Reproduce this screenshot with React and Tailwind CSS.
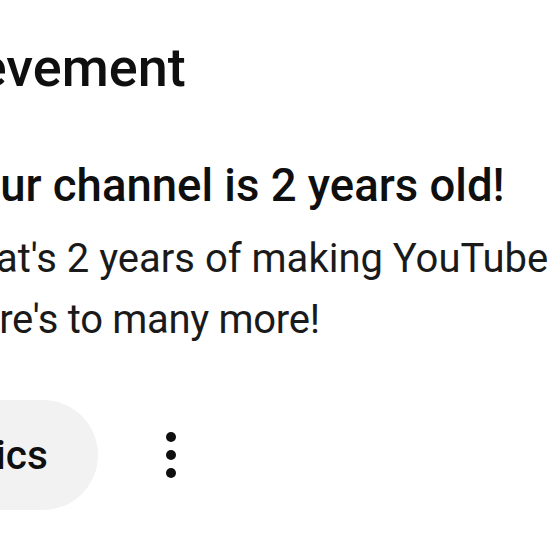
import React from 'react';

const App = () => {
    return (
        <div className="w-[560px] h-[560px] overflow-hidden bg-white font-['Roboto',sans-serif] text-[#0f0f0f] whitespace-nowrap">
            <div className="pt-[38px]">
                <h1 className="-ml-[130px] text-[54px] font-medium leading-[60px]">Achievement</h1>
                <h2 className="-ml-[52px] mt-[61px] text-[45.5px] font-medium leading-[54px]">Your channel is 2 years old!</h2>
                <p className="-ml-[50px] mt-[15px] text-[40px] leading-[61px] text-[#1a1a1a]">
                    <span className="block">That's 2 years of making YouTube awesome.</span>
                    <span className="block tracking-[-0.3px]">Here's to many more!</span>
                </p>
                <div className="-ml-[171px] mt-[50px] flex items-center">
                    <button className="h-[110px] pl-[52px] pr-[50px] rounded-full bg-[#f2f2f2] text-[40.5px] font-medium">
                        Analytics
                    </button>
                    <button className="ml-[53px] w-[40px] h-[60px] flex flex-col items-center justify-center gap-[8px]">
                        <span className="block w-[10px] h-[10px] rounded-full bg-[#0f0f0f]"></span>
                        <span className="block w-[10px] h-[10px] rounded-full bg-[#0f0f0f]"></span>
                        <span className="block w-[10px] h-[10px] rounded-full bg-[#0f0f0f]"></span>
                    </button>
                </div>
            </div>
        </div>
    );
};

export default App;
